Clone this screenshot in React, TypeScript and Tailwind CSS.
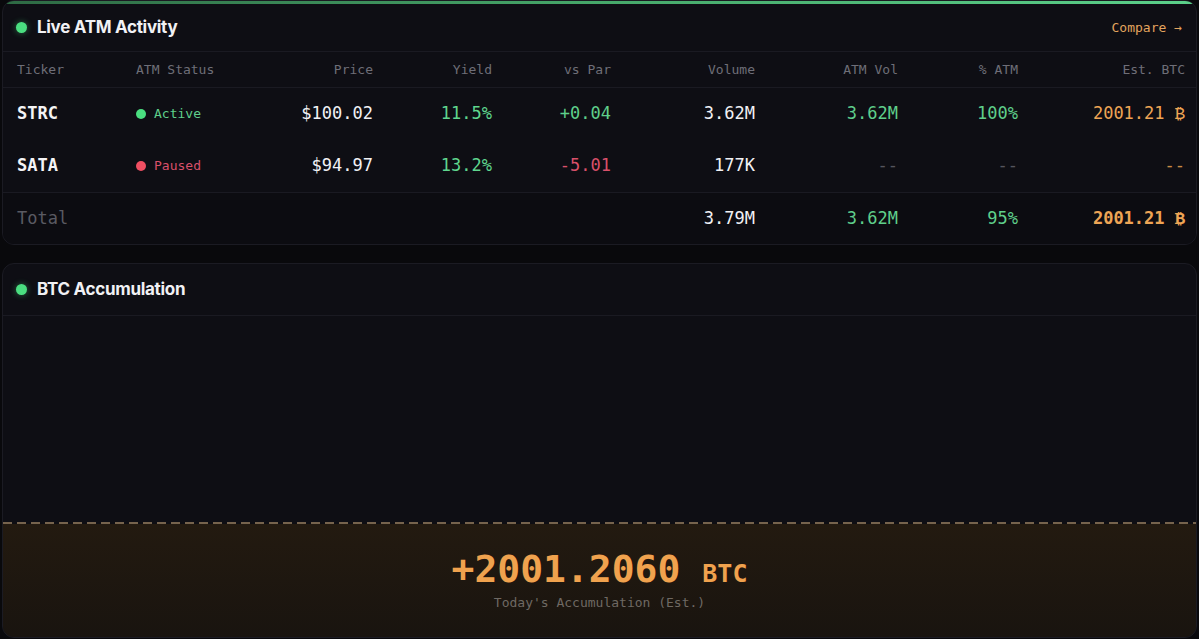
import React from 'react';

const mono = "font-['DejaVu_Sans_Mono','Liberation_Mono',monospace]";
const sans = "font-['Inter','Noto_Sans',sans-serif]";
const cols = 'grid grid-cols-[119px_118px_119px_119px_119px_144px_143px_120px_167px] items-center pl-[14px] pr-[13px]';

type Row = {
	ticker: string;
	active: boolean;
	price: string;
	yieldPct: string;
	vsPar: string;
	volume: string;
	atmVol: string;
	pctAtm: string;
	estBtc: string;
};

const rows: Row[] = [
	{ ticker: 'STRC', active: true, price: '$100.02', yieldPct: '11.5%', vsPar: '+0.04', volume: '3.62M', atmVol: '3.62M', pctAtm: '100%', estBtc: '2001.21 ₿' },
	{ ticker: 'SATA', active: false, price: '$94.97', yieldPct: '13.2%', vsPar: '-5.01', volume: '177K', atmVol: '--', pctAtm: '--', estBtc: '--' },
];

function Dot({ className }: { className: string }) {
	return <span className={`inline-block rounded-full ${className}`} />;
}

function CardHeader({ title, right, h }: { title: string; right?: React.ReactNode; h: string }) {
	return (
		<div className={`flex ${h} items-center justify-between border-b border-[#1a1a22] pl-[13px] pr-[14px]`}>
			<div className="flex items-center gap-[10px]">
				<Dot className="h-[11px] w-[11px] bg-[#4ade80] shadow-[0_0_6px_rgba(74,222,128,0.45)]" />
				<span className={`${sans} text-[17px] font-bold tracking-[-0.3px] text-[#f1f1f4]`}>{title}</span>
			</div>
			{right}
		</div>
	);
}

export default function App() {
	return (
		<div className="flex h-[639px] w-full flex-col gap-[18px] overflow-hidden bg-[#09090c] px-[2px]">
			{/* live atm activity */}
			<section className="h-[245px] shrink-0 overflow-hidden rounded-xl border border-[#1b1b23] bg-[#0e0e14]">
				<div className="h-[3px] bg-gradient-to-r from-[#2e6a44] via-[#46a86a] to-[#5bd08a]" />
				<CardHeader
					h="h-[48px]"
					title="Live ATM Activity"
					right={<span className={`${mono} text-[13px] text-[#e3a45e]`}>Compare →</span>}
				/>
				<div className={`${cols} ${mono} h-[36px] border-b border-[#1a1a22] text-[13px] text-[#6e6e78]`}>
					<span>Ticker</span>
					<span>ATM Status</span>
					<span className="text-right">Price</span>
					<span className="text-right">Yield</span>
					<span className="text-right">vs Par</span>
					<span className="text-right">Volume</span>
					<span className="text-right">ATM Vol</span>
					<span className="text-right">% ATM</span>
					<span className="text-right">Est. BTC</span>
				</div>
				{rows.map((r) => (
					<div key={r.ticker} className={`${cols} ${mono} h-[52px] text-[17px]`}>
						<span className="font-bold text-[#f4f4f6]">{r.ticker}</span>
						<span className="flex items-center gap-[8px] text-[13px]">
							<Dot className={`h-[10px] w-[10px] ${r.active ? 'bg-[#4ade80]' : 'bg-[#ef4f62]'}`} />
							<span className={r.active ? 'text-[#5fcf8b]' : 'text-[#d9506a]'}>{r.active ? 'Active' : 'Paused'}</span>
						</span>
						<span className="text-right text-[#f1f1f4]">{r.price}</span>
						<span className="text-right text-[#5fd68e]">{r.yieldPct}</span>
						<span className={`text-right ${r.vsPar.startsWith('-') ? 'text-[#d9506a]' : 'text-[#5fcf8b]'}`}>{r.vsPar}</span>
						<span className="text-right text-[#f1f1f4]">{r.volume}</span>
						<span className={`text-right ${r.atmVol === '--' ? 'text-[#55555d]' : 'text-[#5fcf8b]'}`}>{r.atmVol}</span>
						<span className={`text-right ${r.pctAtm === '--' ? 'text-[#55555d]' : 'text-[#5fcf8b]'}`}>{r.pctAtm}</span>
						<span className={`text-right ${r.estBtc === '--' ? 'text-[#c98a45]' : 'text-[#eea555]'}`}>{r.estBtc}</span>
					</div>
				))}
				<div className={`${cols} ${mono} h-[52px] border-t border-[#1a1a22] bg-[#0c0c11] text-[17px]`}>
					<span className="text-[#5a5a62]">Total</span>
					<span />
					<span />
					<span />
					<span />
					<span className="text-right text-[#f1f1f4]">3.79M</span>
					<span className="text-right text-[#5fcf8b]">3.62M</span>
					<span className="text-right text-[#5fcf8b]">95%</span>
					<span className="text-right font-bold text-[#eea555]">2001.21 ₿</span>
				</div>
			</section>

			{/* btc accumulation */}
			<section className="flex h-[375px] shrink-0 flex-col overflow-hidden rounded-xl border border-[#1b1b23] bg-[#0e0e14]">
				<CardHeader h="h-[52px]" title="BTC Accumulation" />
				<div className="h-[206px] shrink-0" />
				<div className="h-[2px] shrink-0 bg-[repeating-linear-gradient(90deg,#76634d_0_9px,transparent_9px_14px)]" />
				<div className="flex flex-1 flex-col items-center justify-center bg-gradient-to-b from-[#231a10] to-[#19140f] pb-[2px]">
					<div className={`${mono} flex items-baseline gap-[22px] font-bold text-[#f0a24e]`}>
						<span className="text-[38px] leading-[44px]">+2001.2060</span>
						<span className="text-[25px]">BTC</span>
					</div>
					<span className={`${mono} text-[13px] text-[#6f6963]`}>Today's Accumulation (Est.)</span>
				</div>
			</section>
		</div>
	);
}
